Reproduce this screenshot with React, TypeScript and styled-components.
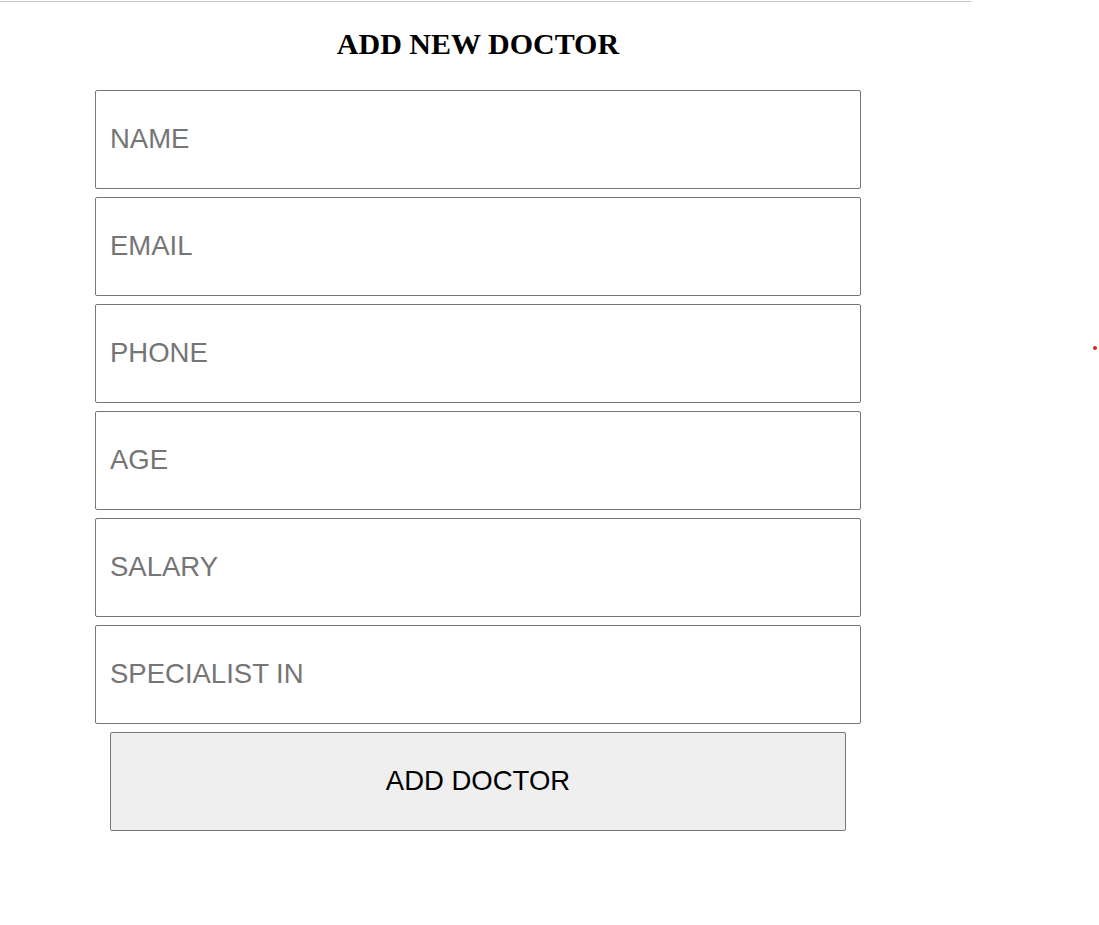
import styled, { createGlobalStyle } from 'styled-components';

const GlobalStyle = createGlobalStyle`
  body {
    margin: 0;
    background: #ffffff;
    font-family: "Liberation Sans", Arial, sans-serif;
  }
`

const Page = styled.div`
  position: relative;
  width: 1099px;
  min-height: 925px;
`

const TopRule = styled.div`
  width: 971px;
  margin-top: 1px;
  border-top: 1px solid #c4c4c4;
`

const FormWrap = styled.div`
  width: 766px;
  margin-left: 95px;
  display: flex;
  flex-direction: column;
  align-items: center;
`

const Title = styled.h2`
  font-family: "Liberation Serif", "Times New Roman", serif;
  font-weight: bold;
  font-size: 30px;
  line-height: 34px;
  margin: 25px 0 29px;
  color: #000;
`

const Form = styled.form`
  width: 100%;
  display: flex;
  flex-direction: column;
  align-items: center;
  gap: 8px;
`

const Field = styled.input`
  box-sizing: border-box;
  width: 766px;
  height: 99px;
  padding: 0 14px 2px;
  font-family: "Liberation Sans", Arial, sans-serif;
  font-size: 27.5px;
  color: #000;
  border: 1px solid #767676;
  border-radius: 2px;
  background: #fff;
  outline: none;

  &::placeholder {
    color: #757575;
  }
`

const SubmitButton = styled.button`
  box-sizing: border-box;
  width: 736px;
  height: 99px;
  padding: 0 0 2px;
  font-family: "Liberation Sans", Arial, sans-serif;
  font-size: 27.5px;
  color: #000;
  background: #efefef;
  border: 1px solid #767676;
  border-radius: 2px;
  cursor: pointer;
`

const Dot = styled.span`
  position: absolute;
  left: 1093px;
  top: 345px;
  width: 4px;
  height: 4px;
  border-radius: 50%;
  background: #e02020;
`

const fields = ['NAME', 'EMAIL', 'PHONE', 'AGE', 'SALARY', 'SPECIALIST IN']

function App() {
  return (
    <>
      <GlobalStyle />
      <Page>
        <TopRule />
        <FormWrap>
          <Title>ADD NEW DOCTOR</Title>
          <Form onSubmit={(e) => e.preventDefault()}>
            {fields.map((f) => (
              <Field key={f} type="text" placeholder={f} />
            ))}
            <SubmitButton type="submit">ADD DOCTOR</SubmitButton>
          </Form>
        </FormWrap>
        <Dot />
      </Page>
    </>
  )
}

export default App
